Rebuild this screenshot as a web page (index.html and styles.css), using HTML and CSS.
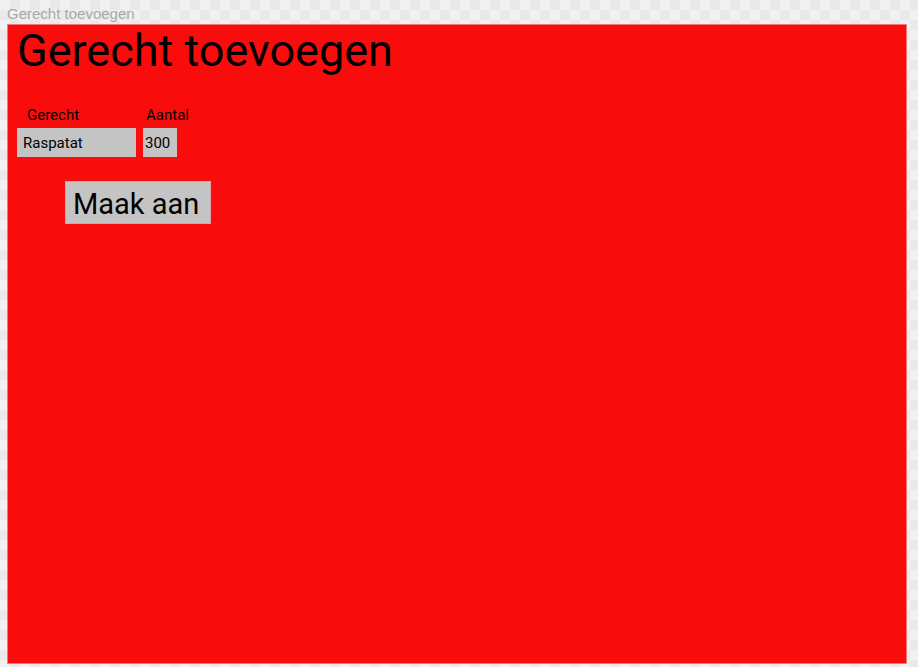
FILE: index.html
```html
<!DOCTYPE html>
<html>
<head>
<meta charset="utf-8">
<link rel="stylesheet" href="styles.css">
</head>
<body>
<div class="window-title">Gerecht toevoegen</div>
<main class="panel">
  <h1 class="heading">Gerecht toevoegen</h1>
  <div class="fields">
    <div class="field field-dish">
      <label class="field-label">Gerecht</label>
      <div class="field-input input-dish">Raspatat</div>
    </div>
    <div class="field field-amount">
      <label class="field-label">Aantal</label>
      <div class="field-input input-amount">300</div>
    </div>
  </div>
  <div class="actions">
    <button class="create-btn">Maak aan</button>
  </div>
</main>
</body>
</html>
```
FILE: styles.css
```css
html, body {
  margin: 0;
  padding: 0;
}
body {
  width: 918px;
  height: 667px;
  background-color: #f1f1f1;
  background-image:
    linear-gradient(45deg, #e9e9e9 25%, transparent 25%, transparent 75%, #e9e9e9 75%),
    linear-gradient(45deg, #e9e9e9 25%, transparent 25%, transparent 75%, #e9e9e9 75%);
  background-size: 20px 20px;
  background-position: 0 0, 10px 10px;
  font-family: Roboto, "Liberation Sans", sans-serif;
  overflow: hidden;
}
.window-title {
  height: 24px;
  box-sizing: border-box;
  padding: 6px 0 0 7px;
  font-family: "Liberation Sans", Arial, sans-serif;
  font-size: 15px;
  line-height: 16px;
  color: #a8a8a8;
}
.panel {
  box-sizing: border-box;
  width: 900px;
  height: 640px;
  margin-left: 7px;
  background: #f90c0c;
  border: 1px solid #f47878;
  padding: 4px 0 0 9px;
  display: flex;
  flex-direction: column;
}
.heading {
  margin: 0;
  font-weight: 400;
  font-size: 45px;
  line-height: 44px;
  color: #000;
}
.fields {
  display: flex;
  gap: 7px;
  margin-top: 34px;
}
.field {
  display: flex;
  flex-direction: column;
  gap: 5px;
}
.field-label {
  font-size: 15px;
  line-height: 16px;
  color: #000;
}
.field-dish .field-label { padding-left: 10px; }
.field-amount .field-label { padding-left: 3px; }
.field-input {
  box-sizing: border-box;
  height: 29px;
  padding-top: 2px;
  background: #c4c4c4;
  font-size: 15px;
  line-height: 27px;
  color: #000;
}
.input-dish {
  width: 119px;
  padding-left: 6px;
}
.input-amount {
  width: 34px;
  padding-left: 2px;
}
.actions {
  display: flex;
  padding-left: 48px;
  margin-top: 24px;
}
.create-btn {
  box-sizing: border-box;
  width: 146px;
  height: 43px;
  margin: 0;
  padding: 2px 0 0 7px;
  text-align: left;
  background: #c4c4c4;
  border: 1px solid #d4a8a8;
  border-radius: 0;
  font-family: Roboto, "Liberation Sans", sans-serif;
  font-size: 29px;
  line-height: 34px;
  color: #000;
}
```
